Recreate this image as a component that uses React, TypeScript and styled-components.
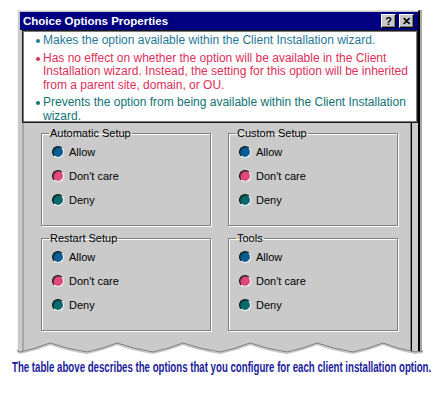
import React from "react";
import styled, { createGlobalStyle } from "styled-components";

const GlobalStyle = createGlobalStyle`
  html, body { margin: 0; padding: 0; background: #fff; }
  body { font-family: "Liberation Sans", Arial, sans-serif; }
`;

const Page = styled.div`
  width: 440px;
  height: 400px;
  padding: 10px 0 0 17px;
  box-sizing: border-box;
  overflow: hidden;
`;

const Window = styled.div`
  position: relative;
  width: 403px;
  box-sizing: border-box;
  border-left: 1px solid #f4f4f4;
  border-top: 1px solid #e4e4e4;
  border-right: 2px solid #000;
  padding: 1px 0 0 2px;
  background: #cacaca;
  box-shadow: 2px 0 0 #a8a8a8;
`;

const TitleBar = styled.div`
  height: 18px;
  display: flex;
  align-items: center;
  justify-content: space-between;
  padding: 0 4px 0 3px;
  background: #000080;
  color: #fff;
  font-size: 11.5px;
  font-weight: bold;
`;

const TitleButtons = styled.div`
  display: flex;
  gap: 3px;
`;

const TitleButton = styled.span`
  width: 15px;
  height: 14px;
  box-sizing: border-box;
  display: flex;
  align-items: center;
  justify-content: center;
  background: #c8c8c8;
  border: 1px solid;
  border-color: #fff #000 #000 #fff;
  box-shadow: inset -1px -1px #808080;
  color: #000;
  font-size: 11px;
  font-weight: bold;
  line-height: 1;
`;

const Body = styled.div`
  padding: 0 0 0 2px;
`;

const TabPage = styled.div`
  width: 390px;
  box-sizing: border-box;
  border-left: 2px solid #a6a6a6;
  border-right: 1px solid #000;
  box-shadow: inset -1px 0 #808080;
  padding: 97px 12px 9px 17px;
  display: grid;
  grid-template-columns: 170px 170px;
  column-gap: 17px;
  row-gap: 6px;
`;

const Group = styled.fieldset`
  margin: 0;
  padding: 0 0 13px 0;
  min-width: 0;
  border: 1px solid #808080;
  box-shadow: inset 1px 1px #fff, 1px 1px #fff;
`;

const GroupTitle = styled.legend`
  margin-left: 7px;
  padding: 0 1px;
  font-size: 11px;
  line-height: 13px;
  color: #000;
`;

const Options = styled.div`
  display: flex;
  flex-direction: column;
  padding-left: 10px;
`;

const Option = styled.label`
  height: 24px;
  display: flex;
  align-items: center;
  gap: 5px;
  font-size: 11px;
  color: #000;
`;

const Radio = styled.span<{ $fill: string }>`
  width: 12px;
  height: 12px;
  box-sizing: border-box;
  border-radius: 50%;
  border: 1px solid;
  border-color: #111 #fff #fff #111;
  background: ${({ $fill }) => $fill};
  box-shadow: inset 1px 1px rgba(0, 0, 0, 0.3);
`;

const HelpPopup = styled.div`
  position: absolute;
  left: 4px;
  top: 19px;
  width: 396px;
  height: 93px;
  box-sizing: border-box;
  background: #fff;
  border: 1px solid #1a1a1a;
  box-shadow: inset 0 0 0 1px #7a7a7a;
  padding: 3px 4px 0 13px;
  font-size: 12px;
  line-height: 13.5px;
`;

const HelpItem = styled.div<{ $color: string }>`
  display: flex;
  gap: 3px;
  margin-bottom: 4px;
  color: ${({ $color }) => $color};
  white-space: nowrap;
`;

const Bullet = styled.span<{ $color: string }>`
  flex: none;
  width: 4px;
  height: 4px;
  margin-top: 5px;
  border-radius: 50%;
  background: ${({ $color }) => $color};
`;

const TornEdge = styled.svg`
  display: block;
`;

const Caption = styled.div`
  margin: 2px 0 0 -5px;
  width: max-content;
  font-size: 14px;
  line-height: 16px;
  font-weight: bold;
  color: #1c1c9c;
  white-space: nowrap;
  transform: scaleX(0.69);
  transform-origin: left center;
`;

const groups = ["Automatic Setup", "Custom Setup", "Restart Setup", "Tools"];

const choices = [
  { label: "Allow", fill: "#0b5e92" },
  { label: "Don't care", fill: "#e04a78" },
  { label: "Deny", fill: "#0a6a6c" },
];

const help = [
  { color: "#1f7896", lines: ["Makes the option available within the Client Installation wizard."] },
  {
    color: "#dc2f5a",
    lines: [
      "Has no effect on whether the option will be available in the Client",
      "Installation wizard. Instead, the setting for this option will be inherited",
      "from a parent site, domain, or OU.",
    ],
  },
  { color: "#0f7474", lines: ["Prevents the option from being available within the Client Installation", "wizard."] },
];

// wave: lows and peaks along the torn bottom edge
const wave =
  "M0,10 L3,12 Q18,9 33,3 Q50,9 70,12 Q85,9 100,3 Q117,9 136,12 Q151,9 166,3 Q183,9 203,12 " +
  "Q218,9 233,3 Q250,9 270,12 Q285,9 300,3 Q317,9 336,12 Q351,9 366,3 Q381,9 398,12 L406,11";

export default function App() {
  return (
    <Page>
      <GlobalStyle />
      <Window>
        <TitleBar>
          <span>Choice Options Properties</span>
          <TitleButtons>
            <TitleButton>?</TitleButton>
            <TitleButton>✕</TitleButton>
          </TitleButtons>
        </TitleBar>
        <Body>
          <TabPage>
            {groups.map((g) => (
              <Group key={g}>
                <GroupTitle>{g}</GroupTitle>
                <Options>
                  {choices.map((c) => (
                    <Option key={c.label}>
                      <Radio $fill={c.fill} />
                      {c.label}
                    </Option>
                  ))}
                </Options>
              </Group>
            ))}
          </TabPage>
        </Body>
        <HelpPopup>
          {help.map((h, i) => (
            <HelpItem key={i} $color={h.color}>
              <Bullet $color={h.color} />
              <div>
                {h.lines.map((l, j) => (
                  <div key={j}>{l}</div>
                ))}
              </div>
            </HelpItem>
          ))}
        </HelpPopup>
      </Window>
      <TornEdge width="406" height="17" viewBox="0 0 406 17">
        <defs>
          <clipPath id="torn">
            <path d={wave + " L406,0 L0,0 Z"} />
          </clipPath>
        </defs>
        <g clipPath="url(#torn)">
          <rect x="0" y="0" width="403" height="17" fill="#cacaca" />
          <rect x="0" y="0" width="1" height="17" fill="#f4f4f4" />
          <rect x="5" y="0" width="2" height="17" fill="#a6a6a6" />
          <rect x="393" y="0" width="1" height="17" fill="#808080" />
          <rect x="394" y="0" width="1" height="17" fill="#000" />
          <rect x="401" y="0" width="2" height="17" fill="#000" />
          <rect x="403" y="0" width="2" height="17" fill="#a8a8a8" />
        </g>
        <path d={wave} fill="none" stroke="#c4c4c4" strokeWidth="1.5" transform="translate(0,1.2)" />
        <path d={wave} fill="none" stroke="#7a7a7a" strokeWidth="1" />
      </TornEdge>
      <Caption>The table above describes the options that you configure for each client installation option.</Caption>
    </Page>
  );
}
